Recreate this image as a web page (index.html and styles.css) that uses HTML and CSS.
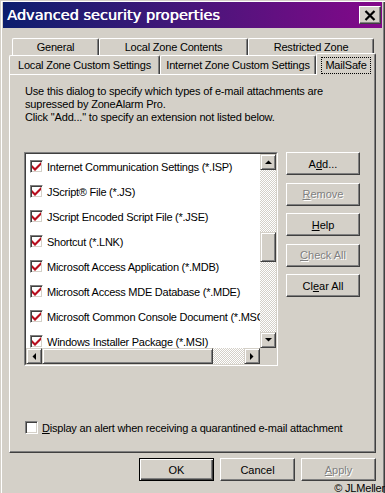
FILE: index.html
```html
<!DOCTYPE html>
<html>
<head>
<meta charset="utf-8">
<link rel="stylesheet" href="styles.css">
</head>
<body>
<div class="window">
  <div class="titlebar">
    <span class="title">Advanced security properties</span>
    <span class="close"><svg width="12" height="11" viewBox="0 0 12 11"><path d="M1.5 1 L10.5 10 M10.5 1 L1.5 10" stroke="#000" stroke-width="2.2" fill="none"/></svg></span>
  </div>
  <div class="tabs">
    <div class="tabrow back">
      <div class="tab w-general">General</div>
      <div class="tab w-lzc">Local Zone Contents</div>
      <div class="tab w-rz">Restricted Zone</div>
    </div>
    <div class="tabrow front">
      <div class="tab w-lzcs">Local Zone Custom Settings</div>
      <div class="tab w-izcs">Internet Zone Custom Settings</div>
      <div class="tab w-ms sel"><span class="focus">MailSafe</span></div>
    </div>
  </div>
  <div class="panel">
    <p class="desc">Use this dialog to specify which types of e-mail attachments are<br>supressed by ZoneAlarm Pro.<br>Click "Add..." to specify an extension not listed below.</p>
    <div class="main">
      <div class="listbox">
        <div class="listinner">
          <div class="rows">
            <div class="row"><span class="cb"><svg width="11" height="11" viewBox="1 1 11 11"><polygon points="2,5 5,8 11,2 11,5 5,11 2,8" fill="#b80c1c"/></svg></span><span>Internet Communication Settings (*.ISP)</span></div>
            <div class="row"><span class="cb"><svg width="11" height="11" viewBox="1 1 11 11"><polygon points="2,5 5,8 11,2 11,5 5,11 2,8" fill="#b80c1c"/></svg></span><span>JScript® File (*.JS)</span></div>
            <div class="row"><span class="cb"><svg width="11" height="11" viewBox="1 1 11 11"><polygon points="2,5 5,8 11,2 11,5 5,11 2,8" fill="#b80c1c"/></svg></span><span>JScript Encoded Script File (*.JSE)</span></div>
            <div class="row"><span class="cb"><svg width="11" height="11" viewBox="1 1 11 11"><polygon points="2,5 5,8 11,2 11,5 5,11 2,8" fill="#b80c1c"/></svg></span><span>Shortcut (*.LNK)</span></div>
            <div class="row"><span class="cb"><svg width="11" height="11" viewBox="1 1 11 11"><polygon points="2,5 5,8 11,2 11,5 5,11 2,8" fill="#b80c1c"/></svg></span><span>Microsoft Access Application (*.MDB)</span></div>
            <div class="row"><span class="cb"><svg width="11" height="11" viewBox="1 1 11 11"><polygon points="2,5 5,8 11,2 11,5 5,11 2,8" fill="#b80c1c"/></svg></span><span>Microsoft Access MDE Database (*.MDE)</span></div>
            <div class="row"><span class="cb"><svg width="11" height="11" viewBox="1 1 11 11"><polygon points="2,5 5,8 11,2 11,5 5,11 2,8" fill="#b80c1c"/></svg></span><span>Microsoft Common Console Document (*.MSC)</span></div>
            <div class="row"><span class="cb"><svg width="11" height="11" viewBox="1 1 11 11"><polygon points="2,5 5,8 11,2 11,5 5,11 2,8" fill="#b80c1c"/></svg></span><span>Windows Installer Package (*.MSI)</span></div>
          </div>
          <div class="vscroll">
            <div class="sbtn"><svg width="7" height="4" viewBox="0 0 7 4"><polygon points="0,4 7,4 3.5,0.5" fill="#000"/></svg></div>
            <div class="vthumb"></div>
            <div class="sbtn down"><svg width="7" height="4" viewBox="0 0 7 4"><polygon points="0,0 7,0 3.5,3.5" fill="#000"/></svg></div>
          </div>
          <div class="hscroll">
            <div class="sbtn"><svg width="4" height="7" viewBox="0 0 4 7"><polygon points="4,0 4,7 0.5,3.5" fill="#000"/></svg></div>
            <div class="hthumb"></div>
            <div class="sbtn right"><svg width="4" height="7" viewBox="0 0 4 7"><polygon points="0,0 0,7 3.5,3.5" fill="#000"/></svg></div>
          </div>
          <div class="corner"></div>
        </div>
      </div>
      <div class="btncol">
        <div class="btn">A<u>d</u>d...</div>
        <div class="btn dis"><u>R</u>emove</div>
        <div class="btn"><u>H</u>elp</div>
        <div class="btn dis"><u>C</u>heck All</div>
        <div class="btn">Cl<u>e</u>ar All</div>
      </div>
    </div>
    <div class="alert"><span class="cb"></span><span><u>D</u>isplay an alert when receiving a quarantined e-mail attachment</span></div>
  </div>
  <div class="footer">
    <div class="btn wide default">OK</div>
    <div class="btn wide">Cancel</div>
    <div class="btn wide dis"><u>A</u>pply</div>
  </div>
  <div class="credit">© JLMeller</div>
</div>
</body>
</html>
```
FILE: styles.css
```css
* { box-sizing: border-box; }
html, body { margin: 0; padding: 0; }
body {
  width: 385px;
  height: 493px;
  overflow: hidden;
  background: #d4d0c8;
  font-family: "Liberation Sans", Arial, sans-serif;
  font-size: 11px;
  color: #000;
}
.window {
  position: relative;
  width: 385px;
  height: 493px;
  padding: 2px 3px 0 3px;
  background: #d4d0c8;
  box-shadow: inset 1px 1px #d4d0c8, inset 2px 2px #fff, inset -1px 0 #404040, inset -2px 0 #808080;
}
.titlebar {
  height: 26px;
  display: flex;
  align-items: center;
  justify-content: space-between;
  padding: 0 1px 0 4px;
  background: linear-gradient(90deg, #0c1e6e 0%, #48167a 50%, #84088a 100%);
}
.title {
  color: #fff;
  font-family: "DejaVu Sans", sans-serif;
  font-size: 14.5px;
  text-shadow: 0.5px 0 #fff;
  white-space: nowrap;
}
.close {
  width: 22px;
  height: 18px;
  display: flex;
  align-items: center;
  justify-content: center;
  background: #d4d0c8;
  border-top: 1px solid #fff;
  border-left: 1px solid #fff;
  border-right: 1px solid #404040;
  border-bottom: 1px solid #404040;
  box-shadow: inset -1px -1px #808080;
}
.tabs { margin-top: 10px; }
.tabrow { display: flex; }
.tabrow.back { padding-left: 9px; height: 17px; }
.tabrow.front { padding-left: 6px; height: 19px; }
.tab {
  height: 100%;
  display: flex;
  align-items: center;
  justify-content: center;
  background: #d4d0c8;
  border-top: 1px solid #fff;
  border-left: 1px solid #fff;
  border-right: 1px solid #404040;
  border-radius: 2px 2px 0 0;
  box-shadow: inset -1px 0 #808080;
  white-space: nowrap;
  letter-spacing: -0.2px;
}
.w-general { width: 87px; }
.w-lzc { width: 149px; }
.w-rz { width: 126px; }
.w-lzcs { width: 151px; }
.w-izcs { width: 156px; }
.w-ms { width: 60px; }
.tab.sel {
  height: 22px;
  margin-top: -2px;
  position: relative;
  z-index: 1;
  padding-top: 1px;
}
.focus {
  outline: 1px dotted #000;
  padding: 1px 3px 2px 3px;
}
.panel {
  margin-left: 6px;
  width: 367px;
  height: 379px;
  border-top: 1px solid #fff;
  border-left: 1px solid #fff;
  border-right: 1px solid #404040;
  border-bottom: 1px solid #404040;
  box-shadow: inset -1px -1px #808080;
  padding: 10px 0 0 15px;
}
.desc {
  margin: 0;
  line-height: 13px;
  letter-spacing: -0.18px;
}
.main {
  display: flex;
  margin-top: 28px;
  margin-left: -1px;
}
.listbox {
  width: 254px;
  height: 214px;
  border-top: 1px solid #808080;
  border-left: 1px solid #808080;
  border-right: 1px solid #fff;
  border-bottom: 1px solid #fff;
}
.listinner {
  width: 252px;
  height: 212px;
  border-top: 1px solid #404040;
  border-left: 1px solid #404040;
  border-right: 1px solid #d4d0c8;
  border-bottom: 1px solid #d4d0c8;
  display: grid;
  grid-template-columns: 234px 16px;
  grid-template-rows: 194px 16px;
  background: #fff;
}
.rows { overflow: hidden; }
.row {
  height: 25px;
  display: flex;
  align-items: center;
  gap: 4px;
  padding-left: 4px;
  white-space: nowrap;
  letter-spacing: -0.25px;
}
.cb {
  flex: none;
  width: 13px;
  height: 13px;
  display: flex;
  background: #fff;
  border-top: 1px solid #808080;
  border-left: 1px solid #808080;
  border-right: 1px solid #fff;
  border-bottom: 1px solid #fff;
  box-shadow: inset 1px 1px #404040, inset -1px -1px #d4d0c8;
}
.cb svg { display: block; }
.vscroll, .hscroll {
  display: flex;
  background-color: #fff;
  background-image: conic-gradient(#d4d0c8 25%, #fff 0 50%, #d4d0c8 0 75%, #fff 0);
  background-size: 2px 2px;
}
.vscroll { flex-direction: column; }
.sbtn, .vthumb, .hthumb, .corner {
  flex: none;
  background: #d4d0c8;
}
.sbtn, .vthumb, .hthumb {
  border-top: 1px solid #d4d0c8;
  border-left: 1px solid #d4d0c8;
  border-right: 1px solid #404040;
  border-bottom: 1px solid #404040;
  box-shadow: inset 1px 1px #fff, inset -1px -1px #808080;
}
.sbtn {
  width: 16px;
  height: 16px;
  display: flex;
  align-items: center;
  justify-content: center;
}
.vthumb { width: 16px; height: 30px; margin-top: 62px; }
.sbtn.down { margin-top: auto; }
.hthumb { width: 171px; height: 16px; }
.sbtn.right { margin-left: auto; }
.btncol {
  display: flex;
  flex-direction: column;
  gap: 7.5px;
  margin-left: 8px;
}
.btn {
  width: 74px;
  height: 23px;
  display: flex;
  align-items: center;
  justify-content: center;
  background: #d4d0c8;
  border-top: 1px solid #fff;
  border-left: 1px solid #fff;
  border-right: 1px solid #404040;
  border-bottom: 1px solid #404040;
  box-shadow: inset -1px -1px #808080;
  white-space: nowrap;
}
.btn.dis {
  color: #808080;
  text-shadow: 1px 1px #fff;
}
.alert {
  display: flex;
  align-items: center;
  gap: 4px;
  margin-top: 55px;
  white-space: nowrap;
  letter-spacing: -0.2px;
}
.footer {
  display: flex;
  justify-content: flex-end;
  gap: 6px;
  margin-top: 5px;
  width: 373px;
}
.btn.wide { width: 75px; }
.btn.default {
  border: 1px solid #000;
  box-shadow: inset 1px 1px #fff, inset -1px -1px #404040, inset -2px -2px #808080;
}
.credit {
  position: absolute;
  right: 0;
  bottom: -1px;
  line-height: 11px;
  font-size: 11px;
  letter-spacing: -0.2px;
}
```
